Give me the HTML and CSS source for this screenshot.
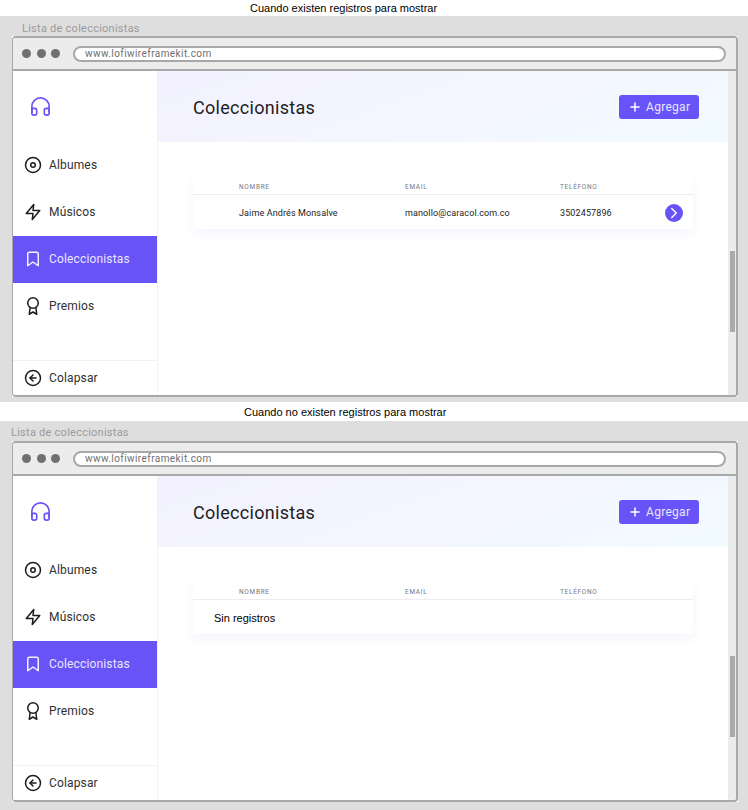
FILE: index.html
```html
<!DOCTYPE html>
<html lang="es">
<head>
<meta charset="utf-8">
<title>Lista de coleccionistas</title>
<link rel="stylesheet" href="styles.css">
</head>
<body>
<svg class="defs" width="0" height="0" aria-hidden="true">
  <symbol id="i-head" viewBox="0 0 24 24"><path d="M3 18v-6a9 9 0 0 1 18 0v6"/><path d="M21 19a2 2 0 0 1-2 2h-1a2 2 0 0 1-2-2v-3a2 2 0 0 1 2-2h3zM3 19a2 2 0 0 0 2 2h1a2 2 0 0 0 2-2v-3a2 2 0 0 0-2-2H3z"/></symbol>
  <symbol id="i-disc" viewBox="0 0 24 24"><circle cx="12" cy="12" r="10"/><circle cx="12" cy="12" r="3"/></symbol>
  <symbol id="i-zap" viewBox="0 0 24 24"><polygon points="13 2 3 14 12 14 11 22 21 10 12 10 13 2"/></symbol>
  <symbol id="i-book" viewBox="0 0 24 24"><path d="M19 21l-7-5-7 5V5a2 2 0 0 1 2-2h10a2 2 0 0 1 2 2z"/></symbol>
  <symbol id="i-award" viewBox="0 0 24 24"><circle cx="12" cy="8" r="7"/><polyline points="8.2 13.9 7 23 12 20 17 23 15.8 13.9"/></symbol>
  <symbol id="i-back" viewBox="0 0 24 24"><circle cx="12" cy="12" r="10"/><polyline points="12 8 8 12 12 16"/><line x1="16" y1="12" x2="8" y2="12"/></symbol>
  <symbol id="i-plus" viewBox="0 0 24 24"><line x1="12" y1="5" x2="12" y2="19"/><line x1="5" y1="12" x2="19" y2="12"/></symbol>
  <symbol id="i-next" viewBox="0 0 24 24"><polyline points="9 18 15 12 9 6"/></symbol>
</svg>

<p class="caption caption-first">Cuando existen registros para mostrar</p>
<section class="panel panel-first">
  <h2 class="panel-title">Lista de coleccionistas</h2>
  <div class="browser">
    <div class="frame">
      <div class="chrome">
        <span class="dot"></span><span class="dot"></span><span class="dot"></span>
        <div class="url">www.lofiwireframekit.com</div>
      </div>
      <div class="app">
        <aside class="side">
          <div class="logo"><svg class="ico ico-logo"><use href="#i-head"/></svg></div>
          <nav class="nav">
            <a class="item"><svg class="ico"><use href="#i-disc"/></svg>Albumes</a>
            <a class="item"><svg class="ico"><use href="#i-zap"/></svg>Músicos</a>
            <a class="item active"><svg class="ico"><use href="#i-book"/></svg>Coleccionistas</a>
            <a class="item"><svg class="ico"><use href="#i-award"/></svg>Premios</a>
          </nav>
          <a class="collapse"><svg class="ico"><use href="#i-back"/></svg>Colapsar</a>
        </aside>
        <main class="main">
          <header class="hero">
            <h1 class="hero-title">Coleccionistas</h1>
            <button class="add"><svg class="ico ico-plus"><use href="#i-plus"/></svg>Agregar</button>
          </header>
          <div class="table">
            <div class="row head"><span>NOMBRE</span><span>EMAIL</span><span>TELÉFONO</span></div>
            <div class="row body">
              <span>Jaime Andrés Monsalve</span><span>manollo@caracol.com.co</span><span>3502457896</span>
              <span class="go"><svg class="ico ico-next"><use href="#i-next"/></svg></span>
            </div>
          </div>
        </main>
        <div class="scroll"><div class="thumb"></div></div>
      </div>
    </div>
  </div>
</section>

<p class="caption caption-second">Cuando no existen registros para mostrar</p>
<section class="panel panel-second">
  <h2 class="panel-title title-second">Lista de coleccionistas</h2>
  <div class="browser">
    <div class="frame">
      <div class="chrome">
        <span class="dot"></span><span class="dot"></span><span class="dot"></span>
        <div class="url">www.lofiwireframekit.com</div>
      </div>
      <div class="app">
        <aside class="side">
          <div class="logo"><svg class="ico ico-logo"><use href="#i-head"/></svg></div>
          <nav class="nav">
            <a class="item"><svg class="ico"><use href="#i-disc"/></svg>Albumes</a>
            <a class="item"><svg class="ico"><use href="#i-zap"/></svg>Músicos</a>
            <a class="item active"><svg class="ico"><use href="#i-book"/></svg>Coleccionistas</a>
            <a class="item"><svg class="ico"><use href="#i-award"/></svg>Premios</a>
          </nav>
          <a class="collapse"><svg class="ico"><use href="#i-back"/></svg>Colapsar</a>
        </aside>
        <main class="main">
          <header class="hero">
            <h1 class="hero-title">Coleccionistas</h1>
            <button class="add"><svg class="ico ico-plus"><use href="#i-plus"/></svg>Agregar</button>
          </header>
          <div class="table">
            <div class="row head"><span>NOMBRE</span><span>EMAIL</span><span>TELÉFONO</span></div>
            <div class="empty">Sin registros</div>
          </div>
        </main>
        <div class="scroll"><div class="thumb"></div></div>
      </div>
    </div>
  </div>
</section>
</body>
</html>
```

FILE: styles.css
```css
* { box-sizing: border-box; }
html, body { margin: 0; padding: 0; background: #fff; }
body { width: 748px; height: 810px; overflow: hidden; font-family: Roboto, "Liberation Sans", sans-serif; }
.defs { position: absolute; }

.caption { margin: 0; font: 11px/16px "Liberation Sans", Arial, sans-serif; color: #000; }
.caption-first { height: 16px; padding-left: 250px; }
.caption-second { height: 19px; padding: 2px 0 0 244px; }

.panel { background: #dedede; }
.panel-first { height: 386px; padding: 6px 10px 0 12px; }
.panel-second { height: 389px; padding: 5px 10px 0 11px; }
.panel-second .browser { margin-left: 1px; }
.panel-title { margin: 0 0 3px 10px; height: 11px; font: 400 11px/13px Roboto, sans-serif; letter-spacing: .25px; color: #9b9b9b; }
.title-second { margin-left: 0; height: 12px; margin-bottom: 3px; }

.browser { width: 726px; height: 361px; background: #fff; }
.frame { height: 100%; border: 2px solid #a8a8a8; border-left-width: 1px; border-radius: 4px; display: flex; flex-direction: column; overflow: hidden; background: #fff; }
.chrome { height: 33px; flex: none; background: #ececec; border-bottom: 2px solid #a8a8a8; display: flex; align-items: center; padding-left: 9px; gap: 5.7px; }
.dot { width: 9px; height: 9px; border-radius: 50%; background: #707070; }
.url { margin-left: 7px; width: 653px; height: 16px; background: #fff; border: 2px solid #a8a8a8; border-radius: 8px; padding-left: 10px; font: 400 10px/12px Roboto, sans-serif; letter-spacing: .42px; color: #6f6f6f; }

.app { flex: 1; min-height: 0; display: flex; }
.side { width: 144.5px; flex: none; display: flex; flex-direction: column; background: #fff; border-right: 1px solid #f2f2f5; }
.logo { height: 71px; flex: none; padding: 24px 0 0 16px; }
.ico { width: 18px; height: 18px; flex: none; fill: none; stroke: #1c1c1c; stroke-width: 2; stroke-linecap: round; stroke-linejoin: round; }
.ico-logo { display: block; width: 23px; height: 23px; stroke: #6854f6; stroke-width: 1.7; }
.nav { flex: 1; display: flex; flex-direction: column; }
.item { height: 47px; display: flex; align-items: center; gap: 7px; padding: 0 0 1px 11px; font-size: 12px; letter-spacing: .15px; color: #303030; }
.item.active { background: #6854f6; color: #e9e6ff; }
.item.active .ico { stroke: #f4f2ff; }
.collapse { height: 35px; flex: none; border-top: 1px solid #f2f2f5; display: flex; align-items: center; gap: 7px; padding: 0 0 1px 11px; font-size: 12px; letter-spacing: .15px; color: #303030; }

.main { flex: 1; min-width: 0; background: #fff; }
.hero { height: 71px; display: flex; align-items: center; justify-content: space-between; padding: 0 29px 0 35.5px; background: linear-gradient(160deg, #f3f1ff 0%, #f4f6ff 55%, #f1fbff 100%); }
.hero-title { margin: 2px 0 0; font: 400 18px/22px Roboto, sans-serif; letter-spacing: .3px; color: #1d1d22; }
.add { width: 80px; height: 24px; display: flex; align-items: center; gap: 4px; padding: 0 0 0 9px; border: 0; border-radius: 3px; background: #6854f6; color: #e9e6ff; font: 400 12px/14px Roboto, sans-serif; letter-spacing: .3px; }
.ico-plus { width: 14px; height: 14px; stroke: #fff; stroke-width: 2.6; }

.table { margin: 35px 35px 0 35.5px; background: #fff; box-shadow: 0 4px 10px rgba(104, 84, 246, .07); }
.row { display: grid; grid-template-columns: 46px 166px 155px 1fr; align-items: center; }
.row > span:first-child { grid-column: 2; }
.head { height: 18px; padding-top: 2px; border-bottom: 1px solid #ececf0; font-size: 6.5px; letter-spacing: .7px; color: #77777c; }
.body { position: relative; height: 34px; padding-top: 2px; font-size: 9px; letter-spacing: .12px; color: #1c1c1c; }
.go { position: absolute; right: 10px; top: 9px; width: 18px; height: 18px; border-radius: 50%; background: #6854f6; display: flex; align-items: center; justify-content: center; }
.ico-next { width: 18px; height: 18px; stroke: #fff; }
.empty { height: 34px; padding-left: 21px; font: 11px/37px "Liberation Sans", Arial, sans-serif; color: #000; }

.scroll { width: 8px; flex: none; background: #ececec; padding: 180px 1px 0 2px; }
.thumb { height: 81px; background: #ababab; }
```
